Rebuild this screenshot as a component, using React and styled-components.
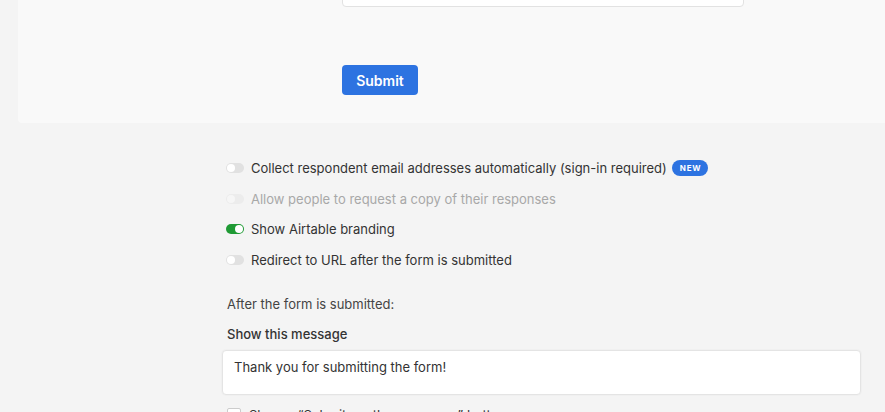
import styled, { createGlobalStyle } from "styled-components";

const GlobalStyle = createGlobalStyle`
  body {
    margin: 0;
    background: #f4f4f4;
    font-family: Inter, "Liberation Sans", sans-serif;
    -webkit-font-smoothing: antialiased;
    overflow: hidden;
  }
`;

const Page = styled.div`
  width: 885px;
  height: 412px;
  overflow: hidden;
`;

const Preview = styled.div`
  display: flex;
  flex-direction: column;
  align-items: flex-start;
  margin-left: 18px;
  height: 123px;
  background: #f9f9f9;
  border-bottom-left-radius: 4px;
  padding-left: 324px;
  box-sizing: border-box;
`;

const FieldInput = styled.div`
  width: 402px;
  height: 40px;
  margin-top: -33px;
  background: #fff;
  border: 1px solid #e2e2e2;
  border-radius: 4px;
  box-sizing: border-box;
`;

const SubmitButton = styled.button`
  margin-top: 58px;
  width: 76px;
  height: 30px;
  border: none;
  border-radius: 4px;
  background: #2d73e1;
  color: #fff;
  font-family: Inter, "Liberation Sans", sans-serif;
  font-size: 14px;
  font-weight: 600;
  padding: 0;
`;

const Settings = styled.div`
  padding: 30px 0 0 222px;
  width: 639px;
`;

const ToggleRow = styled.div`
  display: flex;
  align-items: center;
  height: 30.6px;
  padding-left: 4px;
  gap: 7px;
  font-size: 13px;
  color: ${(p) => (p.disabled ? "#a8a8a8" : "#333")};
`;

const Toggle = styled.span`
  position: relative;
  width: 18px;
  height: 10px;
  border-radius: 5px;
  flex: none;
  background: ${(p) => (p.on ? "#1f9a34" : p.disabled ? "#ececec" : "#e1e1e1")};
  &::after {
    content: "";
    position: absolute;
    top: 1px;
    left: ${(p) => (p.on ? "9px" : "1px")};
    width: 8px;
    height: 8px;
    border-radius: 50%;
    background: ${(p) => (p.disabled ? "#f6f6f6" : "#fff")};
  }
`;

const Badge = styled.span`
  margin-left: -2px;
  background: #2d73e1;
  color: #fff;
  font-size: 8px;
  font-weight: 700;
  letter-spacing: 0.8px;
  padding: 0 7px 0 8px;
  height: 16px;
  line-height: 16px;
  border-radius: 8px;
`;

const Note = styled.div`
  margin-top: 21px;
  padding-left: 5px;
  font-size: 13px;
  line-height: 16px;
  color: #444;
`;

const Label = styled.div`
  margin-top: 14px;
  padding-left: 5px;
  font-size: 13px;
  line-height: 16px;
  font-weight: 500;
  color: #333;
`;

const MessageBox = styled.div`
  margin-top: 8px;
  height: 45px;
  background: #fff;
  border: 1px solid #e4e4e4;
  border-radius: 4px;
  box-shadow: 0 0 0 1px #f0f0f0;
  box-sizing: border-box;
  padding: 8px 11px;
  font-size: 13px;
  line-height: 16px;
  color: #333;
`;

const CheckRow = styled.div`
  margin-top: 12px;
  padding-left: 5px;
  display: flex;
  align-items: center;
  gap: 8px;
  font-size: 13px;
  color: #333;
`;

const Checkbox = styled.span`
  width: 12px;
  height: 12px;
  border: 1px solid #ccc;
  border-radius: 2px;
  background: #fff;
`;

const options = [
  { label: "Collect respondent email addresses automatically (sign-in required)", badge: true },
  { label: "Allow people to request a copy of their responses", disabled: true },
  { label: "Show Airtable branding", on: true },
  { label: "Redirect to URL after the form is submitted" },
];

export default function App() {
  return (
    <Page>
      <GlobalStyle />
      <Preview>
        <FieldInput />
        <SubmitButton>Submit</SubmitButton>
      </Preview>
      <Settings>
        {options.map((o) => (
          <ToggleRow key={o.label} disabled={o.disabled}>
            <Toggle on={o.on} disabled={o.disabled} />
            {o.label}
            {o.badge && <Badge>NEW</Badge>}
          </ToggleRow>
        ))}
        <Note>After the form is submitted:</Note>
        <Label>Show this message</Label>
        <MessageBox>Thank you for submitting the form!</MessageBox>
        <CheckRow>
          <Checkbox />
          Show a “Submit another response” button
        </CheckRow>
      </Settings>
    </Page>
  );
}
